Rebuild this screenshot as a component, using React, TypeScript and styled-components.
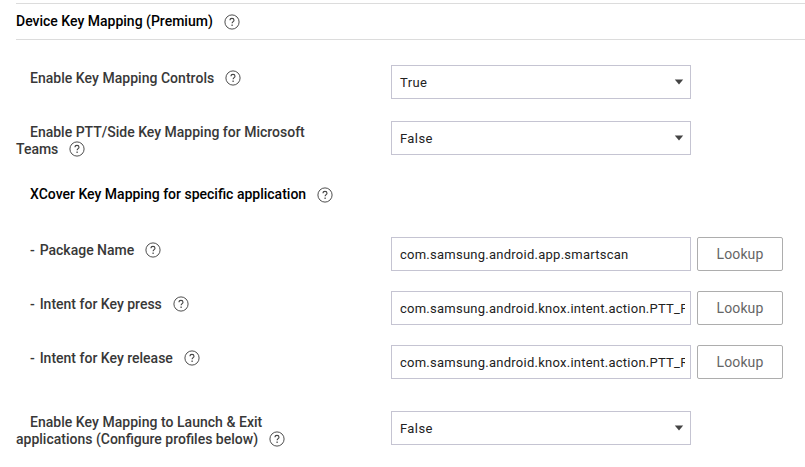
import React from "react";
import styled, { createGlobalStyle } from "styled-components";

const GlobalStyle = createGlobalStyle`
  * { box-sizing: border-box; }
  body {
    margin: 0;
    background: #fff;
    font-family: Roboto, "Liberation Sans", sans-serif;
  }
`;

const Page = styled.main`
  height: 467px;
  padding: 3px 0 0 16px;
`;

const HelpIcon = styled.svg<{ $drop?: number }>`
  width: 16px;
  height: 16px;
  margin-left: 11px;
  vertical-align: -${(p) => p.$drop ?? 3}px;
  overflow: visible;
`;

const SectionHeader = styled.header`
  display: flex;
  align-items: center;
  height: 37px;
  border-top: 1px solid #dcdcdc;
  border-bottom: 1px solid #dcdcdc;
`;

const SectionTitle = styled.h2`
  margin: 0;
  font-size: 14px;
  line-height: 17px;
  font-weight: 500;
  color: #000;
  white-space: nowrap;
`;

const Form = styled.div`
  display: flex;
  flex-direction: column;
  padding-top: 25px;
`;

const Fields = styled.div<{ $gap: number }>`
  display: grid;
  grid-template-columns: 375px 300px 92px;
  height: 34px;
  margin-bottom: ${(p) => p.$gap}px;
  align-items: start;
`;

const Label = styled.div<{ $top?: number; $strong?: boolean }>`
  padding-top: ${(p) => p.$top ?? 5}px;
  text-indent: 14px;
  font-size: 14px;
  line-height: 17px;
  font-weight: 500;
  color: ${(p) => (p.$strong ? "#000" : "#383838")};
  white-space: nowrap;
`;

const Text = styled.span<{ $spacing?: number }>`
  letter-spacing: ${(p) => p.$spacing ?? 0}px;
`;

const Select = styled.div`
  grid-column: 2;
  display: flex;
  align-items: center;
  justify-content: space-between;
  height: 34px;
  padding: 1px 6px 0 8px;
  border: 1px solid #c5c4d2;
  font-size: 13px;
  letter-spacing: 0.4px;
  color: #222;
`;

const Arrow = styled.svg`
  width: 10px;
  height: 6px;
  margin-top: -2px;
`;

const Input = styled.div`
  height: 34px;
  padding: 0 5px 0 8px;
  border: 1px solid #c5c4d2;
  font-size: 13px;
  line-height: 33px;
  letter-spacing: 0.25px;
  color: #222;
`;

const InputValue = styled.div`
  overflow: hidden;
  white-space: nowrap;
`;

const Button = styled.button`
  width: 86px;
  height: 34px;
  margin-left: 6px;
  padding: 0;
  border: 1px solid #adadad;
  border-radius: 2px;
  background: #fff;
  font-family: inherit;
  font-size: 14px;
  letter-spacing: 0.1px;
  color: #666;
`;

const Help = ({ drop }: { drop?: number }) => (
  <HelpIcon $drop={drop} viewBox="0 0 16 16" fill="none" stroke="#444">
    <circle cx="8" cy="8" r="7.1" strokeWidth="0.95" />
    <path d="M6 6.3C6 5.1 6.8 4.4 8 4.4s2 .7 2 1.8c0 1.4-1.9 1.5-1.9 3.1" strokeWidth="1.1" />
    <path d="M8.1 10.6v1.3" strokeWidth="1.2" />
  </HelpIcon>
);

const Dropdown = ({ value }: { value: string }) => (
  <Select>
    <span>{value}</span>
    <Arrow viewBox="0 0 10 6">
      <path d="M.8.6h8.4L5 5.6z" fill="#444" />
    </Arrow>
  </Select>
);

const lookups = [
  { label: "Package Name", value: "com.samsung.android.app.smartscan", gap: 20 },
  { label: "Intent for Key press", value: "com.samsung.android.knox.intent.action.PTT_PRESS", gap: 20 },
  { label: "Intent for Key release", value: "com.samsung.android.knox.intent.action.PTT_RELEASE", gap: 32 },
];

export default function App() {
  return (
    <Page>
      <GlobalStyle />
      <SectionHeader>
        <SectionTitle>
          <Text>Device Key Mapping (Premium)</Text>
          <Help drop={4} />
        </SectionTitle>
      </SectionHeader>
      <Form>
        <Fields $gap={22}>
          <Label>
            <Text $spacing={0.03}>Enable Key Mapping Controls</Text>
            <Help />
          </Label>
          <Dropdown value="True" />
        </Fields>
        <Fields $gap={27}>
          <Label $top={3}>
            <Text>Enable PTT/Side Key Mapping for Microsoft</Text>
            <br />
            <Text>Teams</Text>
            <Help />
          </Label>
          <Dropdown value="False" />
        </Fields>
        <Fields $gap={21}>
          <Label $top={4} $strong>
            <Text>XCover Key Mapping for specific application</Text>
            <Help drop={4} />
          </Label>
        </Fields>
        {lookups.map((f) => (
          <Fields key={f.label} $gap={f.gap}>
            <Label>
              <Text $spacing={0.7}>- </Text>
              <Text>{f.label}</Text>
              <Help />
            </Label>
            <Input>
              <InputValue>{f.value}</InputValue>
            </Input>
            <Button>Lookup</Button>
          </Fields>
        ))}
        <Fields $gap={0}>
          <Label $top={3}>
            <Text $spacing={0.03}>Enable Key Mapping to Launch &amp; Exit</Text>
            <br />
            <Text>applications (Configure profiles below)</Text>
            <Help />
          </Label>
          <Dropdown value="False" />
        </Fields>
      </Form>
    </Page>
  );
}
